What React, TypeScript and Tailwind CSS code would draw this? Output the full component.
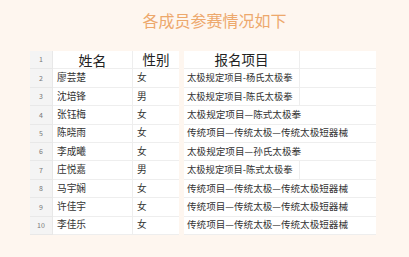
import React from 'react';

const rows = [
    { n: 2, name: '廖芸楚', sex: '女', item: '太极规定项目-杨氏太极拳', split: true },
    { n: 3, name: '沈培锋', sex: '男', item: '太极规定项目-陈氏太极拳', split: true },
    { n: 4, name: '张钰梅', sex: '女', item: '太极规定项目—陈式太极拳', split: false },
    { n: 5, name: '陈晓雨', sex: '女', item: '传统项目—传统太极—传统太极短器械', split: false },
    { n: 6, name: '李成曦', sex: '女', item: '太极规定项目—孙氏太极拳', split: false },
    { n: 7, name: '庄悦嘉', sex: '男', item: '太极规定项目-陈式太极拳', split: true },
    { n: 8, name: '马宇娴', sex: '女', item: '传统项目—传统太极—传统太极短器械', split: false },
    { n: 9, name: '许佳宇', sex: '女', item: '传统项目—传统太极—传统太极短器械', split: false },
    { n: 10, name: '李佳乐', sex: '女', item: '传统项目—传统太极—传统太极短器械', split: false },
];

export default function App() {
    return (
        <div
            className="w-[409px] h-[257px] bg-[#fef6ef] flex flex-col"
            style={{ fontFamily: '"Noto Sans CJK SC", "Noto Sans", sans-serif' }}
        >
            <h1 className="mt-[10px] pl-[20px] text-center text-[16px] leading-[20px] text-[#eda86c]">
                各成员参赛情况如下
            </h1>

            <div className="mt-[21px] ml-[30px] flex flex-col text-[#333]">
                {/* header row */}
                <div className="flex h-[18.4px]">
                    <div className="w-[23px] bg-[#f4f4f4] border-r border-b border-[#e8e8e8] flex items-center justify-center text-[7px] text-[#777]">1</div>
                    <div className="w-[80px] bg-white border-r border-b border-[#eeeeee] flex items-center justify-center text-[14px] leading-none text-[#222]">姓名</div>
                    <div className="w-[46px] bg-white border-b border-[#eeeeee] flex items-center justify-center text-[13.5px] leading-none text-[#222]">性别</div>
                    <div className="w-[5px]" />
                    <div className="w-[116px] bg-white border-r border-b border-[#eeeeee] flex items-center justify-center text-[13.5px] leading-none text-[#222]">报名项目</div>
                    <div className="w-[76px] bg-white border-b border-[#eeeeee]" />
                </div>

                {rows.map((r) => (
                    <div key={r.n} className="flex h-[18.4px]">
                        <div className="w-[23px] bg-[#f4f4f4] border-r border-b border-[#e8e8e8] flex items-center justify-center text-[7px] text-[#777]">{r.n}</div>
                        <div className="w-[80px] bg-white border-r border-b border-[#eeeeee] flex items-center pl-[4px] text-[9.7px] leading-none">{r.name}</div>
                        <div className="w-[46px] bg-white border-b border-[#eeeeee] flex items-center pl-[4px] text-[9.7px] leading-none">{r.sex}</div>
                        <div className="w-[5px]" />
                        {r.split ? (
                            <>
                                <div className="w-[116px] bg-white border-r border-b border-[#eeeeee] flex items-center pl-[3px] text-[9.3px] leading-none whitespace-nowrap">{r.item}</div>
                                <div className="w-[76px] bg-white border-b border-[#eeeeee]" />
                            </>
                        ) : (
                            <div className="w-[192px] bg-white border-b border-[#eeeeee] flex items-center pl-[3px] text-[9.6px] leading-none whitespace-nowrap">{r.item}</div>
                        )}
                    </div>
                ))}
            </div>
        </div>
    );
}
